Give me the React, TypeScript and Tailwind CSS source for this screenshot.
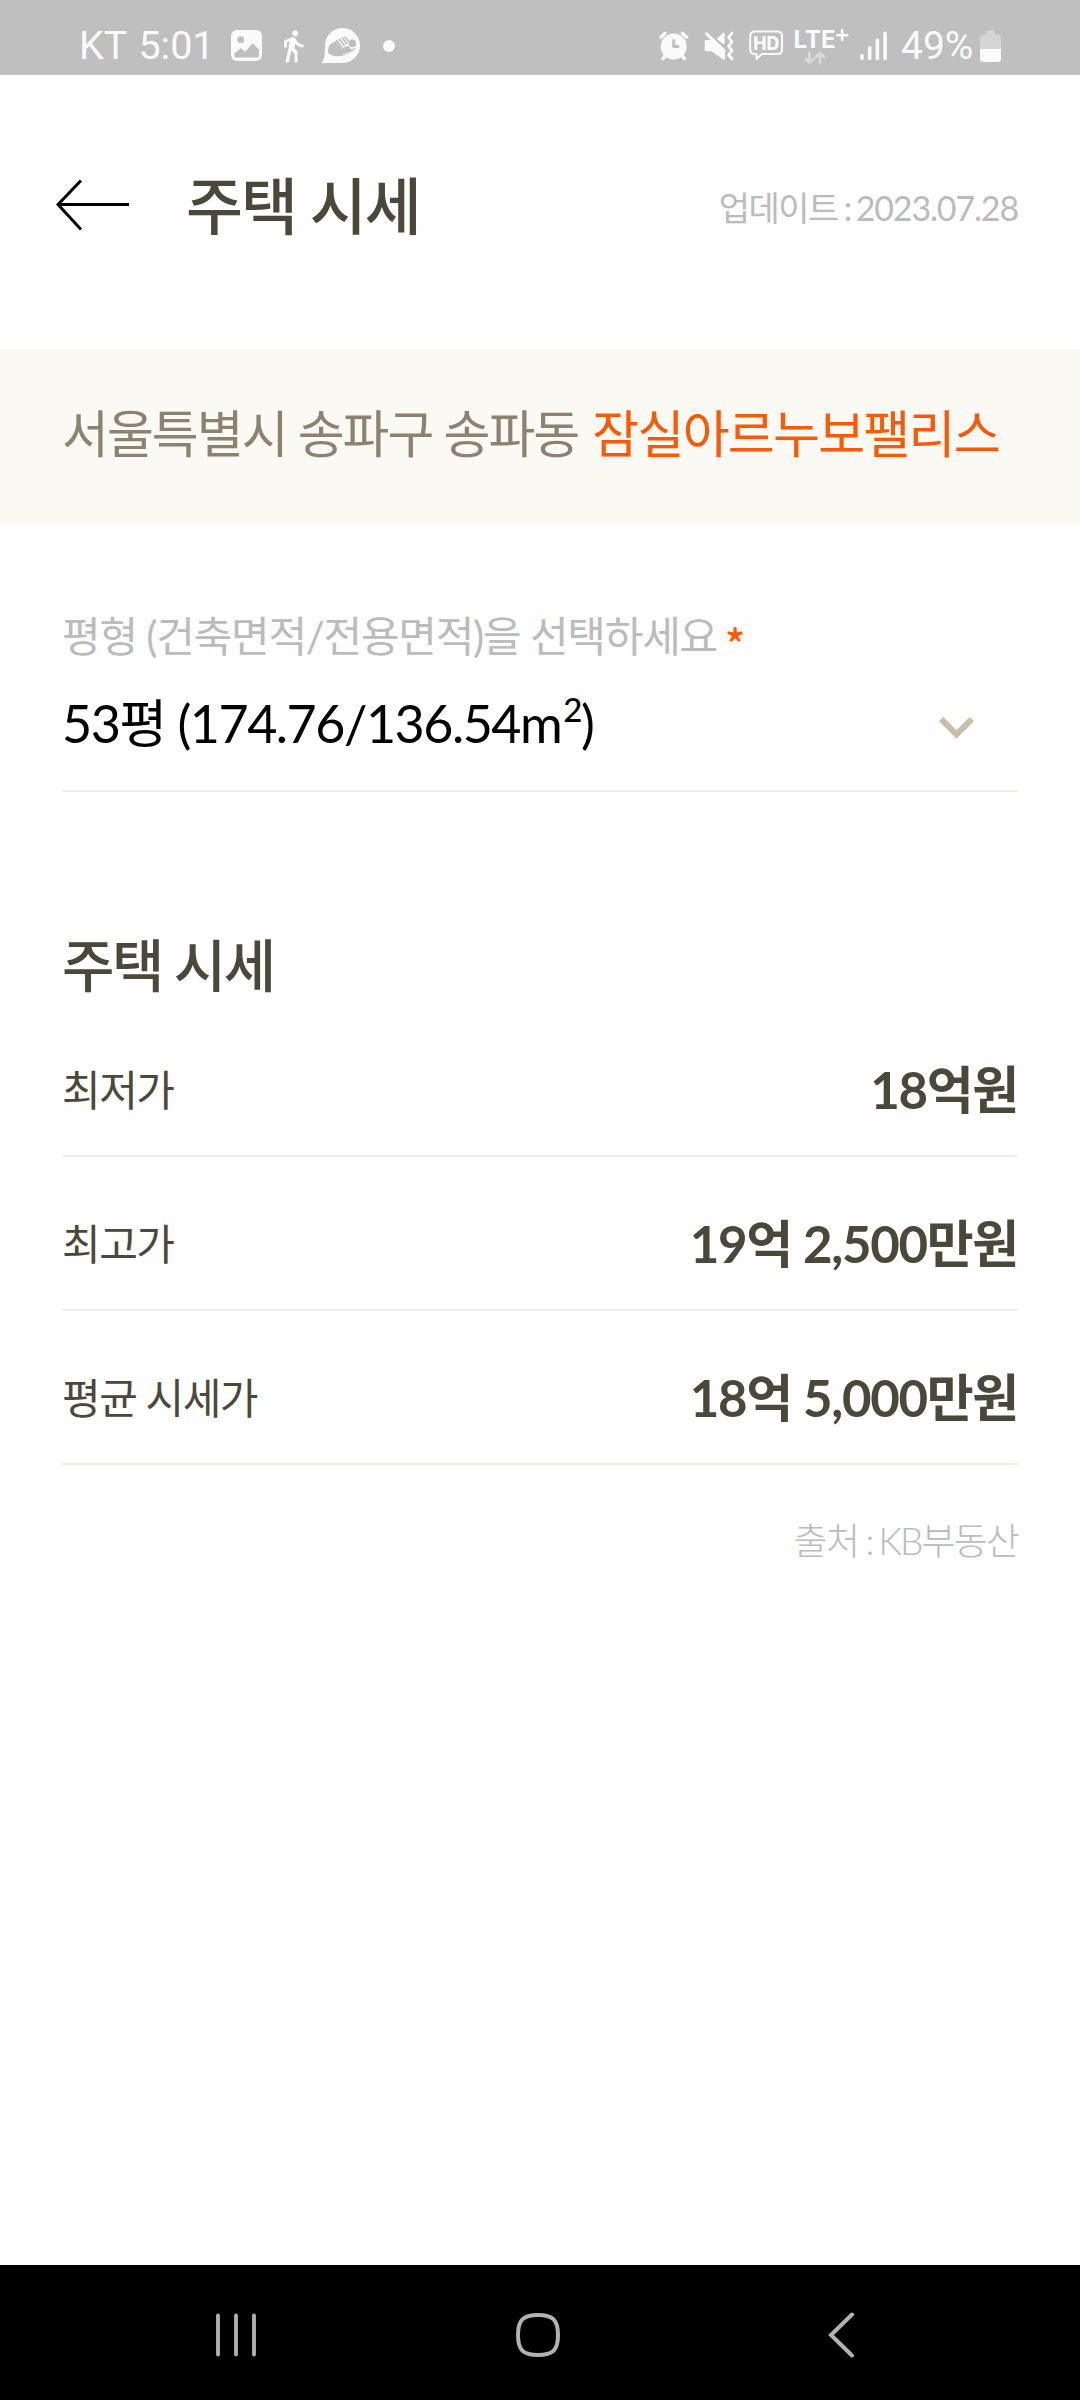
import React from 'react';
import { MdDirectionsWalk } from 'react-icons/md';

const prices = [
  { id: 'min', label: '최저가', value: '18억원' },
  { id: 'max', label: '최고가', value: '19억 2,500만원' },
  { id: 'avg', label: '평균 시세가', value: '18억 5,000만원' }
];

const PictureIcon = () => (
  <svg width="31" height="31" viewBox="0 0 31 31">
    <rect width="31" height="31" rx="6" fill="#fafafa" />
    <circle cx="9.7" cy="9.7" r="3.4" fill="#bfbfbf" />
    <path
      d="M3.3 23.6 9.7 18.2 14.3 21.8 21.7 13.2 27.9 19.4V26Q27.9 27.4 26.5 27.4H4.7Q3.3 27.4 3.3 26Z"
      fill="#bfbfbf"
    />
  </svg>
);

const BubbleIcon = () => (
  <svg className="ml-[10px]" width="40" height="36" viewBox="0 0 40 36">
    <path d="M21.5 35H.5C3 32 4 29 4 17.5A17.5 17.5 0 1 1 21.5 35Z" fill="#fafafa" />
    <circle cx="31.3" cy="15.4" r="3.8" fill="#bfbfbf" />
    <path
      d="M7 22.8C7 17.6 10.6 14.4 15 13.2L20.5 20.4C22.4 19.6 25 17.8 27 18.2C29.4 18.8 28.6 21.2 31 21.2L35.6 19.4C32 25.6 21 29 13.4 28C9.6 27.4 7 25.6 7 22.8Z"
      fill="#bfbfbf"
    />
    <path d="M15.6 12.6 20.6 19M18.4 11.2 23 17M21.2 9.8 25.6 15.4M24 9.2 27.2 13" stroke="#bfbfbf" strokeWidth="1.7" strokeLinecap="round" />
    <path d="M22 26.6C28 25.8 33 23 36.4 19.6" stroke="#fafafa" strokeWidth="1" fill="none" />
  </svg>
);

const AlarmIcon = () => (
  <svg width="30" height="30" viewBox="0 0 30 30" fill="none" strokeLinecap="round">
    <circle cx="14.7" cy="15.5" r="13" fill="#fafafa" />
    <path d="M1.9 6.2 6 2.3M23.4 2.3 27.5 6.2M4 27.6 6.5 24.5M25.4 27.6 22.9 24.5" stroke="#fafafa" strokeWidth="3.4" />
    <path d="M14.7 9.6V15.4H19" stroke="#bfbfbf" strokeWidth="3" strokeLinejoin="round" />
  </svg>
);

const MuteIcon = () => (
  <svg className="ml-[15px]" width="31" height="30" viewBox="0 0 31 30" fill="none" strokeLinecap="round" strokeLinejoin="round">
    <path d="M2 10.3H8L19.8 20.6V27.4L8 19H2Z" fill="#fafafa" stroke="#fafafa" strokeWidth="2.6" />
    <path d="M14 7.8 19.8 2.4V12.2Z" fill="#fafafa" stroke="#fafafa" strokeWidth="1.8" />
    <path d="M2.6 2.8 20 19.6" stroke="#fafafa" strokeWidth="3" />
    <path d="M28 2 24.6 6.4 28 10.8 24.6 15.2 28 19.6 24.6 23.8 28 28" stroke="#fafafa" strokeWidth="2.8" />
  </svg>
);

const HdIcon = () => (
  <svg className="ml-[14px]" width="34" height="31" viewBox="0 0 34 31">
    <path
      d="M6 1.5H28.5Q33 1.5 33 6V19.5Q33 24 28.5 24H13L7.5 29V24H6Q1.2 24 1.2 19.5V6Q1.2 1.5 6 1.5Z"
      fill="none"
      stroke="#fafafa"
      strokeWidth="2"
      strokeLinejoin="round"
    />
    <text x="4.2" y="19.6" className="font-[Inter,sans-serif] text-[18.5px] font-extrabold" textLength="26" lengthAdjust="spacingAndGlyphs" fill="#fafafa">HD</text>
  </svg>
);

const LteIcon = () => (
  <svg className="ml-[10px]" width="56" height="42" viewBox="-2 -2 56 42" fill="none" strokeLinecap="round" strokeLinejoin="round">
    <text x="-1.4" y="21" className="font-[Inter,sans-serif] text-[24px] font-bold leading-6" textLength="42" lengthAdjust="spacingAndGlyphs" fill="#fafafa">LTE</text>
    <path d="M47.2 3V13M42.2 8.2H52.4" stroke="#fafafa" strokeWidth="2.6" />
    <path d="M14.5 26V35.5M10.4 31.8 14.5 35.8 18.6 31.8M25 36V26.4M20.9 30 25 26 29.1 30" stroke="#d9d9d9" strokeWidth="2.8" />
  </svg>
);

const SignalIcon = () => (
  <svg className="ml-[11px]" width="28" height="30" viewBox="0 0 28 30" stroke="#fafafa" strokeWidth="3.6" strokeLinecap="round">
    <path d="M2 24.5V27.4M9.7 16.8V27.4M17.4 9.2V27.4M25.1 2.4V27.4" />
  </svg>
);

const BatteryIcon = () => (
  <svg width="21" height="32" viewBox="0 0 21 32">
    <path d="M6.2 4.6V2Q6.2 .2 8 .2H13Q14.8 .2 14.8 2V4.6H17.5Q21 4.6 21 8.1V19H0V8.1Q0 4.6 3.5 4.6Z" fill="#d5d5d5" />
    <path d="M0 19H21V28.4Q21 31.9 17.5 31.9H3.5Q0 31.9 0 28.4Z" fill="#fafafa" />
  </svg>
);

const StatusBar: React.FC = () => {
  return (
    <div className="flex h-[75px] shrink-0 items-center bg-[#bfbfbf] pl-[79px] pr-[79px] pt-4 font-[Roboto,sans-serif] text-[39px] leading-[46px] text-[#fafafa]">
      <span className="w-[152px] whitespace-nowrap text-[39.5px] [word-spacing:2px]">KT 5:01</span>
      <PictureIcon />
      <MdDirectionsWalk className="ml-[13px] h-9 w-9" />
      <BubbleIcon />
      <div className="ml-[22px] h-3 w-3 rounded-full bg-[#fafafa]" />
      <div className="ml-auto flex items-center">
        <AlarmIcon />
        <MuteIcon />
        <HdIcon />
        <LteIcon />
        <SignalIcon />
        <span className="ml-[13px] w-[79px] whitespace-nowrap">49%</span>
        <BatteryIcon />
      </div>
    </div>
  );
};

const Header: React.FC = () => {
  return (
    <header className="flex h-[274px] shrink-0 items-center pb-[13px] pl-[56px] pr-[62px]">
      <svg className="mb-0.5" width="74" height="52" viewBox="0 0 74 52" fill="none" stroke="#000" strokeWidth="3">
        <path d="M25 1.5 2 25.5 25 50.5M1.5 25.5H73" />
      </svg>
      <h1 className="ml-14 text-[62px] font-medium leading-[80px] tracking-[-2px] text-[#4a473b]">주택 시세</h1>
      <p className="ml-auto pt-1 text-[34px] leading-[44px] text-[#bbbbbb]">
        <span className="tracking-[-1.6px]">업데이트</span>
        <span className="tracking-[-2.6px]"> : </span>
        <span className="tracking-[-1.15px]">2023.07.28</span>
      </p>
    </header>
  );
};

const App: React.FC = () => {
  return (
    <div className="flex h-[2400px] w-[1080px] flex-col bg-[#fefefe] font-[Lato,'Noto_Sans_CJK_KR',sans-serif]">
      <StatusBar />
      <Header />

      <div className="h-[175px] shrink-0 whitespace-nowrap bg-[#fbf9f4] px-[62px] pt-[49px] text-[51px] leading-[72px] tracking-[-2px] text-[#8c8270]">
        서울특별시 송파구 송파동 <span className="ml-[3px] tracking-[-1.75px] text-[#fa5a05]">잠실아르누보팰리스</span>
      </div>

      <main className="flex-1 px-[62px] pt-[84px]">
        <div className="border-b-2 border-[#efeee6] pb-[31px]">
          <div className="flex h-14 text-[42px] leading-[56px] text-[#bbbbbb]">
            <span className="tracking-[-1.25px]">평형 (건축면적/전용면적)을 선택하세요</span>
            <span className="ml-2 pt-[7px] font-['Noto_Sans_CJK_KR',sans-serif] font-medium text-[#ff5a00]">*</span>
          </div>
          <div className="mt-[23px] flex items-center">
            <span className="text-[52px] leading-[72px] tracking-[-1.5px] text-black">
              53평 (174.76/136.54m<span className="ml-[2px] align-[21px] text-[33px] font-medium leading-none">2</span>)
            </span>
            <svg className="ml-auto mr-11 mt-[9px]" width="35" height="22" viewBox="0 0 35 22" fill="none" stroke="#c6bfa9" strokeWidth="6">
              <path d="M2.2 2.2 17.5 17.4 32.8 2.2" />
            </svg>
          </div>
        </div>

        <h2 className="mt-[134px] text-[57px] font-medium leading-[78px] tracking-[-2.5px] text-[#4a473b]">주택 시세</h2>

        {prices.map((price, i) => (
          <div
            key={price.id}
            className={`flex justify-between border-b-2 border-[#efeee6] text-[#4a473b] ${i === 0 ? 'h-[153px] pt-[50px]' : 'h-[154px] pt-[51px]'}`}
          >
            <span className="text-[42px] leading-[72px] tracking-[-1.5px]">{price.label}</span>
            <span className="text-[51px] font-bold leading-[72px] tracking-[-1.3px]">{price.value}</span>
          </div>
        ))}

        <p className="mt-[50px] text-right text-[37px] font-light leading-[52px] text-[#bbbbbb]">
          <span className="tracking-[-1.5px]">출처</span>
          <span className="tracking-[-3px]"> : </span>
          <span className="tracking-[-1.9px]">KB부동산</span>
        </p>
      </main>

      <nav className="flex h-[135px] shrink-0 items-center bg-black pl-[215px] pr-[225px] pt-[5px]">
        <svg width="42" height="44" viewBox="0 0 42 44" stroke="#b2b2b2" strokeWidth="3.8" strokeLinecap="round">
          <path d="M3 2.5V41.5M21 2.5V41.5M39 2.5V41.5" />
        </svg>
        <svg className="ml-[259px]" width="44" height="44" viewBox="0 0 44 44" fill="none" stroke="#b2b2b2" strokeWidth="4">
          <path d="M22 2C37 2 42 7 42 22S37 42 22 42 2 37 2 22 7 2 22 2Z" />
        </svg>
        <svg className="ml-auto" width="27" height="46" viewBox="0 0 27 46" fill="none" stroke="#b2b2b2" strokeWidth="4" strokeLinecap="round">
          <path d="M24 2.5 3 23 24 43.5" />
        </svg>
      </nav>
    </div>
  );
};

export default App;
